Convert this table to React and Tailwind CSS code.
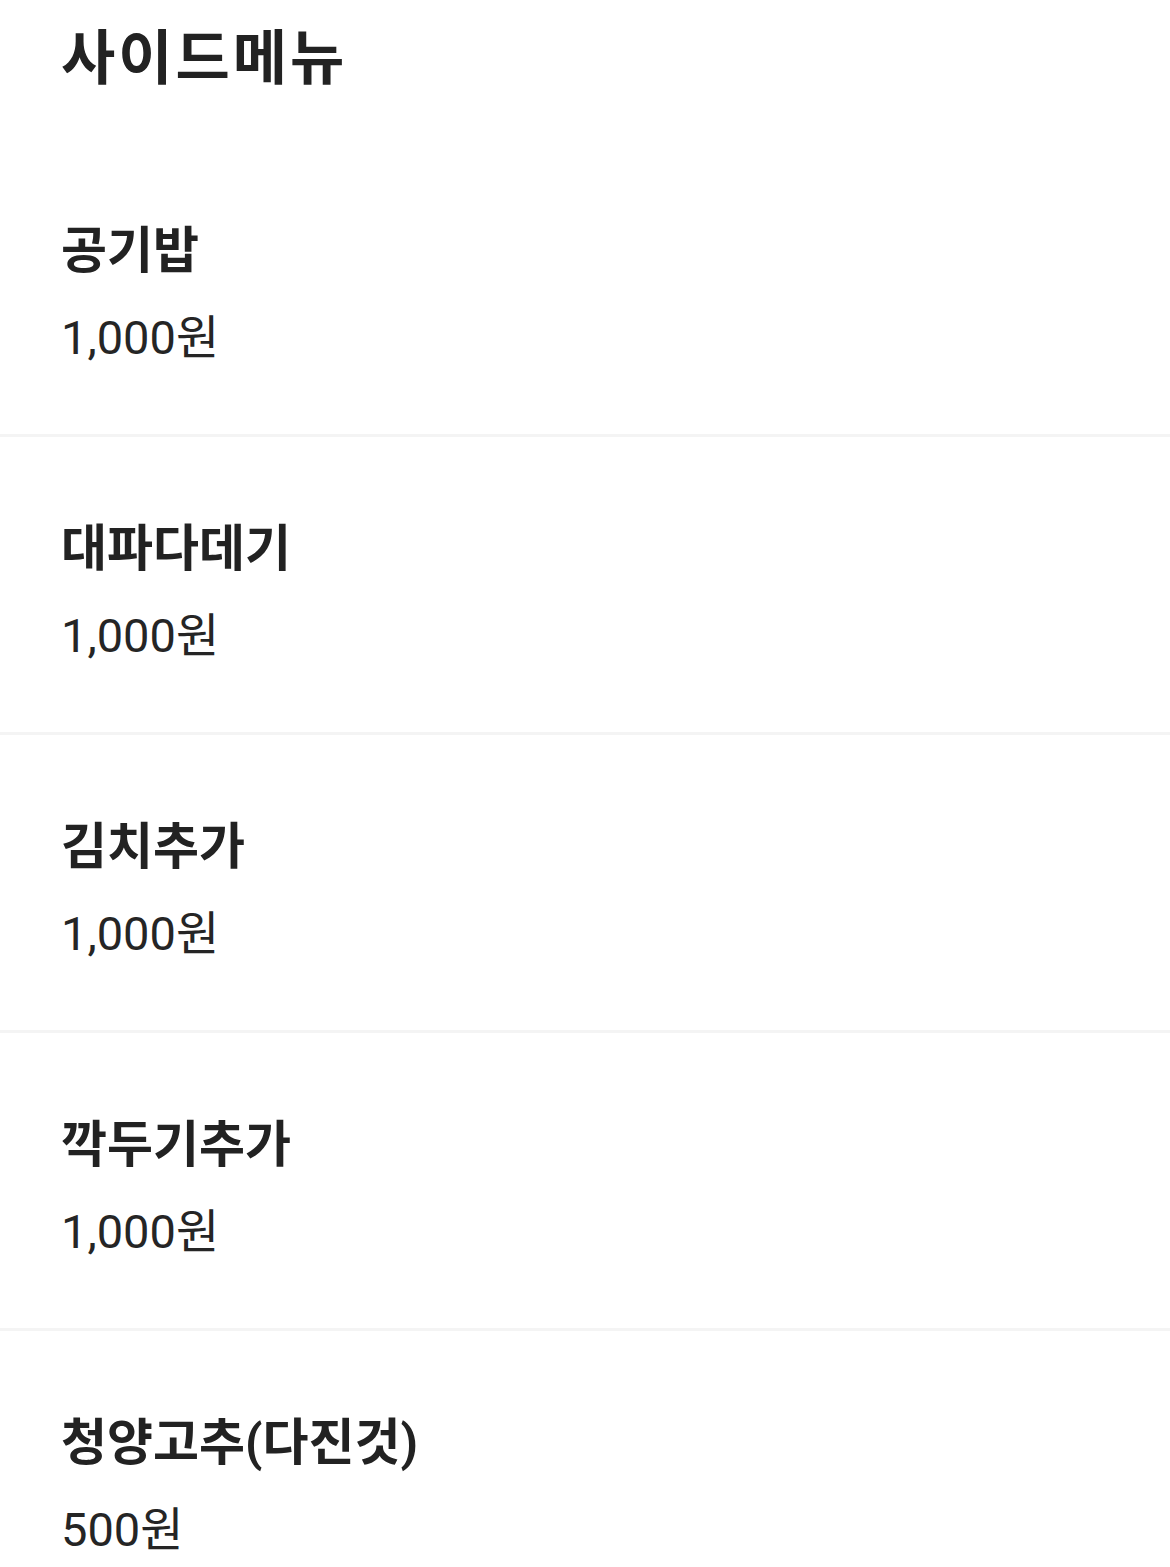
const items = [
  { name: '공기밥', price: '1,000원' },
  { name: '대파다데기', price: '1,000원' },
  { name: '김치추가', price: '1,000원' },
  { name: '깍두기추가', price: '1,000원' },
  { name: '청양고추(다진것)', price: '500원' },
];

export default function App() {
  return (
    <div
      className="w-[1170px] min-h-[1567px] bg-white text-[#222222]"
      style={{ fontFamily: 'Roboto, "Noto Sans CJK KR", sans-serif' }}
    >
      {/* header */}
      <div className="h-[139px] px-[61px] pt-[27px]">
        <h1 className="text-[59px] font-bold leading-[64px] tracking-[3px]">사이드메뉴</h1>
      </div>

      {items.map((item, i) => (
        <div
          key={i}
          className="h-[298px] px-[61px] pt-[80px] border-b-[3px] border-[#f4f4f4]"
        >
          <div className="text-[50px] font-bold leading-[64px]">{item.name}</div>
          <div className="mt-[25px] text-[47px] leading-[60px] text-[#252525]">{item.price}</div>
        </div>
      ))}
    </div>
  );
}
